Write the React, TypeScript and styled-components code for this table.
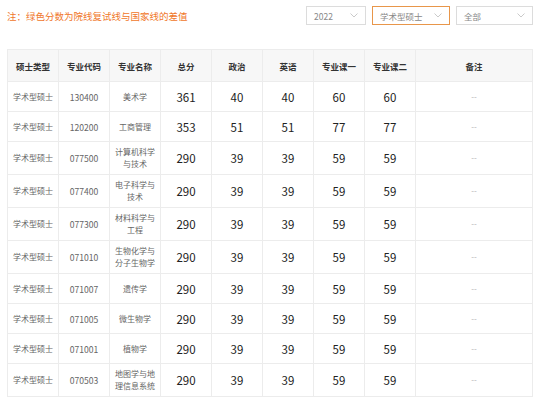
import React from "react";
import styled, { createGlobalStyle } from "styled-components";

const Global = createGlobalStyle`
  html, body { margin: 0; padding: 0; background: #fff; }
  body { font-family: "Noto Sans CJK SC", "Noto Sans", sans-serif; }
`;

const Page = styled.div`
  width: 540px;
  padding: 0 7px;
  box-sizing: border-box;
`;

const TopBar = styled.div`
  display: flex;
  align-items: center;
  justify-content: space-between;
  height: 31px;
  margin-bottom: 18px;
`;

const Note = styled.div`
  color: #f0772a;
  font-size: 9.5px;
  line-height: 12px;
  padding-top: 1px;
`;

const Filters = styled.div`
  display: flex;
  gap: 6px;
  align-items: center;
`;

const Select = styled.div<{ $w: number; $active?: boolean }>`
  width: ${(p) => p.$w}px;
  height: 19px;
  box-sizing: border-box;
  border: 1px solid ${(p) => (p.$active ? "#e8964a" : "#dcdcdc")};
  display: flex;
  align-items: center;
  justify-content: space-between;
  padding: 0 7px 0 7px;
  font-size: 8.5px;
  color: #888;
`;

const Chevron = () => (
  <svg width="8" height="5" viewBox="0 0 8 5">
    <path d="M0.5 0.5 L4 4 L7.5 0.5" fill="none" stroke="#c4c4c4" strokeWidth="0.9" />
  </svg>
);

const Table = styled.table`
  width: 526px;
  border-collapse: collapse;
  table-layout: fixed;
  border: 1px solid #ececec;
`;

const Th = styled.th<{ $w?: number }>`
  ${(p) => (p.$w ? `width: ${p.$w}px;` : "")}
  height: 31px;
  background: #f7f7f7;
  border: 1px solid #ececec;
  font-size: 8.5px;
  font-weight: bold;
  color: #333;
  padding: 0;
  text-align: center;
`;

const Tr = styled.tr`
  height: 30px;
`;

const Td = styled.td<{ $kind?: "text" | "code" | "num" | "dash" }>`
  border: 1px solid #ececec;
  text-align: center;
  padding: 4px 4px;
  font-size: ${(p) => (p.$kind === "num" ? "11.5px" : p.$kind === "code" ? "8.6px" : "8px")};
  line-height: 12px;
  color: ${(p) => (p.$kind === "num" ? "#222" : p.$kind === "dash" ? "#b0b0b0" : "#666")};
  word-break: break-all;
`;

type Row = { code: string; name: string; total: number; pol: number; eng: number; c1: number; c2: number };

const rows: Row[] = [
  { code: "130400", name: "美术学", total: 361, pol: 40, eng: 40, c1: 60, c2: 60 },
  { code: "120200", name: "工商管理", total: 353, pol: 51, eng: 51, c1: 77, c2: 77 },
  { code: "077500", name: "计算机科学与技术", total: 290, pol: 39, eng: 39, c1: 59, c2: 59 },
  { code: "077400", name: "电子科学与技术", total: 290, pol: 39, eng: 39, c1: 59, c2: 59 },
  { code: "077300", name: "材料科学与工程", total: 290, pol: 39, eng: 39, c1: 59, c2: 59 },
  { code: "071010", name: "生物化学与分子生物学", total: 290, pol: 39, eng: 39, c1: 59, c2: 59 },
  { code: "071007", name: "遗传学", total: 290, pol: 39, eng: 39, c1: 59, c2: 59 },
  { code: "071005", name: "微生物学", total: 290, pol: 39, eng: 39, c1: 59, c2: 59 },
  { code: "071001", name: "植物学", total: 290, pol: 39, eng: 39, c1: 59, c2: 59 },
  { code: "070503", name: "地图学与地理信息系统", total: 290, pol: 39, eng: 39, c1: 59, c2: 59 },
];

const headers = ["硕士类型", "专业代码", "专业名称", "总分", "政治", "英语", "专业课一", "专业课二"];

export default function App() {
  return (
    <Page>
      <Global />
      <TopBar>
        <Note>注：绿色分数为院线复试线与国家线的差值</Note>
        <Filters>
          <Select $w={60}>
            <span>2022</span>
            <Chevron />
          </Select>
          <Select $w={78} $active>
            <span>学术型硕士</span>
            <Chevron />
          </Select>
          <Select $w={77}>
            <span>全部</span>
            <Chevron />
          </Select>
        </Filters>
      </TopBar>
      <Table>
        <thead>
          <tr>
            {headers.map((h) => (
              <Th key={h} $w={50}>
                {h}
              </Th>
            ))}
            <Th>备注</Th>
          </tr>
        </thead>
        <tbody>
          {rows.map((r) => (
            <Tr key={r.code}>
              <Td>学术型硕士</Td>
              <Td $kind="code">{r.code}</Td>
              <Td>{r.name}</Td>
              <Td $kind="num">{r.total}</Td>
              <Td $kind="num">{r.pol}</Td>
              <Td $kind="num">{r.eng}</Td>
              <Td $kind="num">{r.c1}</Td>
              <Td $kind="num">{r.c2}</Td>
              <Td $kind="dash">--</Td>
            </Tr>
          ))}
        </tbody>
      </Table>
    </Page>
  );
}
